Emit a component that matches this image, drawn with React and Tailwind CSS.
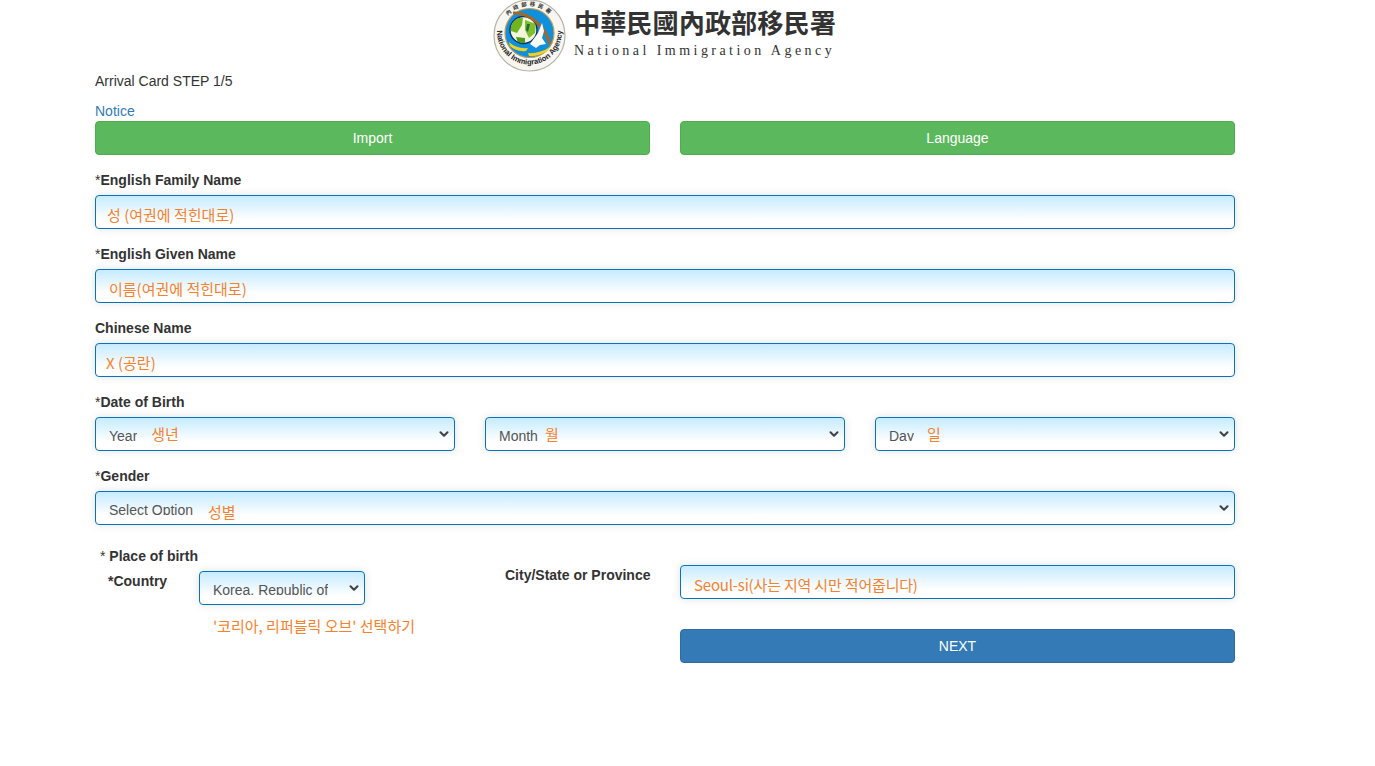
import React from "react";
import { ChevronDown } from "lucide-react";

const KR = "font-['Noto_Sans_CJK_KR',sans-serif] text-[#f6812c] text-[15px] leading-[20px] whitespace-nowrap";
const FIELD = "box-border h-[34px] rounded-[4px] border border-[#0873b9] bg-linear-to-b from-[#c6ebff] to-white to-[75%] shadow-[0_0_8px_rgba(0,0,0,0.12)] flex items-center";

function Label({ star, children }) {
  return (
    <div className="h-[20px] leading-[20px] text-[14px] text-[#333] mb-[5px]">
      {star && <span>*</span>}
      <span className="font-bold">{children}</span>
    </div>
  );
}

function Clip({ children }) {
  return <span className="block h-[15px] overflow-hidden leading-[20px] text-[14px] text-[#555] whitespace-nowrap">{children}</span>;
}

function TextField({ text, pad = "pl-[11px]", extra = "" }) {
  return (
    <div className={`${FIELD} ${pad} pt-[6px]`}>
      <span className={`${KR} ${extra}`}>{text}</span>
    </div>
  );
}

function SelectField({ value, note, gap, className = "", pad = "pl-[13px]" }) {
  return (
    <div className={`${FIELD} ${pad} pr-[3px] ${className}`}>
      <span className="-mt-[1px]"><Clip>{value}</Clip></span>
      {note && <span className={`${KR} ${gap}`}>{note}</span>}
      <ChevronDown className="ml-auto text-[#444]" size={14} strokeWidth={3.6} />
    </div>
  );
}

function Seal() {
  return (
    <svg width="76" height="72" viewBox="0 0 76 72" className="shrink-0">
      <defs>
        <path id="sealBottom" d="M 5 32 A 32.5 32.5 0 0 0 70 32" fill="none" />
        <path id="sealTop" d="M 11 25 A 28 28 0 0 1 64 25" fill="none" />
        <clipPath id="globe"><circle cx="31.5" cy="30" r="13" /></clipPath>
      </defs>
      <circle cx="37.5" cy="35.5" r="35.5" fill="#f7f6f0" stroke="#b5b2a6" strokeWidth="1.2" />
      <circle cx="37.5" cy="33" r="24.5" fill="#0f90dc" stroke="#c79a52" strokeWidth="1.2" />
      <circle cx="31.5" cy="30" r="13.5" fill="#f2f7dc" stroke="#12306a" strokeWidth="1.4" />
      <g clipPath="url(#globe)">
        <path d="M21 18 L31 18 L30 25 L25 33 L19 31 L17 23 Z" fill="#6fb520" />
        <path d="M33 20 L44 24 L43 33 L37 38 L33 30 Z" fill="#7fbe2c" />
        <path d="M35 24 L38 24 L36 32 L34 30 Z" fill="#1f6d3a" />
        <path d="M24 37 L33 38 L33 44 L26 43 Z" fill="#4f9a1c" />
      </g>
      <path d="M21 13 C 36 12, 53 25, 58 44" fill="none" stroke="#a0682c" strokeWidth="3" />
      <path d="M38 44 L46 33 L50 23 L52 31 L50 38 L54 44 L48 45 L44 48 Z" fill="#fbfbf6" />
      <path d="M17 42 Q 24 49 36 48 L 34 51 Q 24 52 18 46 Z" fill="#f2d21d" />
      <path d="M36 53 Q 47 54 58 47 L 55 51 Q 46 57 37 56 Z" fill="#f2d21d" />
      <text className="font-['Liberation_Sans',sans-serif]" fontSize="7.6" fontWeight="700" fill="#222">
        <textPath href="#sealBottom" startOffset="50%" textAnchor="middle">National Immigration Agency</textPath>
      </text>
      <text className="font-['Noto_Sans_CJK_TC',sans-serif]" fontSize="5.5" fontWeight="700" fill="#333" letterSpacing="2.6">
        <textPath href="#sealTop" startOffset="50%" textAnchor="middle">內政部移民署</textPath>
      </text>
    </svg>
  );
}

export default function App() {
  return (
    <div className="w-[1375px] h-[766px] bg-white overflow-hidden font-['Liberation_Sans',sans-serif] text-[#333]">
      <div className="w-[1140px] ml-[95px]">
        <header className="h-[71px] flex items-start pl-[397px] gap-[6px]">
          <Seal />
          <div className="pt-[3px]">
            <div className="font-['Noto_Sans_CJK_TC',sans-serif] font-bold text-[26.2px] leading-[38px] text-[#333] whitespace-nowrap">中華民國內政部移民署</div>
            <div className="mt-[1px] font-['Liberation_Serif',serif] text-[14px] leading-[18px] tracking-[3.45px] text-[#333] whitespace-nowrap">National Immigration Agency</div>
          </div>
        </header>

        <div className="h-[20px] leading-[20px] text-[14px]">Arrival Card STEP 1/5</div>
        <div className="h-[20px] mt-[10px] leading-[20px] text-[14px] text-[#337ab7]">Notice</div>

        <div className="grid grid-cols-[555px_555px] gap-[30px]">
          <button className="box-border h-[34px] rounded-[4px] border border-[#4cae4c] bg-[#5cb85c] text-white text-[14px]">Import</button>
          <button className="box-border h-[34px] rounded-[4px] border border-[#4cae4c] bg-[#5cb85c] text-white text-[14px]">Language</button>
        </div>

        <div className="mt-[15px]">
          <Label star>English Family Name</Label>
          <TextField text="성 (여권에 적힌대로)" />
        </div>
        <div className="mt-[15px]">
          <Label star>English Given Name</Label>
          <TextField text="이름(여권에 적힌대로)" pad="pl-[13px]" />
        </div>
        <div className="mt-[15px]">
          <Label>Chinese Name</Label>
          <TextField text="X (공란)" pad="pl-[10px]" />
        </div>
        <div className="mt-[15px]">
          <Label star>Date of Birth</Label>
          <div className="grid grid-cols-3 gap-[30px]">
            <SelectField value="Year" note="생년" gap="ml-[14px] -mt-[1px]" />
            <SelectField value="Month" note="월" gap="ml-[7px]" />
            <SelectField value="Day" note="일" gap="ml-[13px]" />
          </div>
        </div>
        <div className="mt-[15px]">
          <Label star>Gender</Label>
          <SelectField value="Select Option" note="성별" gap="ml-[15px] mt-[7px]" />
        </div>

        <div className="mt-[21px] grid grid-cols-[555px_555px] gap-[30px]">
          <div>
            <div className="h-[20px] leading-[20px] text-[14px] pl-[5px]">* <span className="font-bold">Place of birth</span></div>
            <div className="mt-[5px] flex items-start pl-[13px]">
              <div className="w-[91px] h-[20px] leading-[20px] text-[14px] font-bold">*Country</div>
              <div className="w-[166px]">
                <SelectField value="Korea, Republic of" className="border-[#2c86c6] shadow-[0_0_6px_rgba(102,175,233,0.8)]" />
                <div className={`${KR} mt-[11px] pl-[14px]`}>'코리아, 리퍼블릭 오브' 선택하기</div>
              </div>
            </div>
          </div>
          <div className="pt-[19px]">
            <div className="flex items-start -ml-[175px]">
              <div className="w-[145px] mr-[30px] shrink-0 text-right h-[20px] leading-[20px] text-[14px] font-bold whitespace-nowrap">City/State or Province</div>
              <div className="w-[555px]">
                <TextField text="Seoul-si(사는 지역 시만 적어줍니다)" pad="pl-[13px]" extra="tracking-[-0.18px]" />
              </div>
            </div>
            <button className="mt-[30px] box-border w-full h-[34px] rounded-[4px] border border-[#2e6da4] bg-[#337ab7] text-white text-[14px]">NEXT</button>
          </div>
        </div>
      </div>
    </div>
  );
}
